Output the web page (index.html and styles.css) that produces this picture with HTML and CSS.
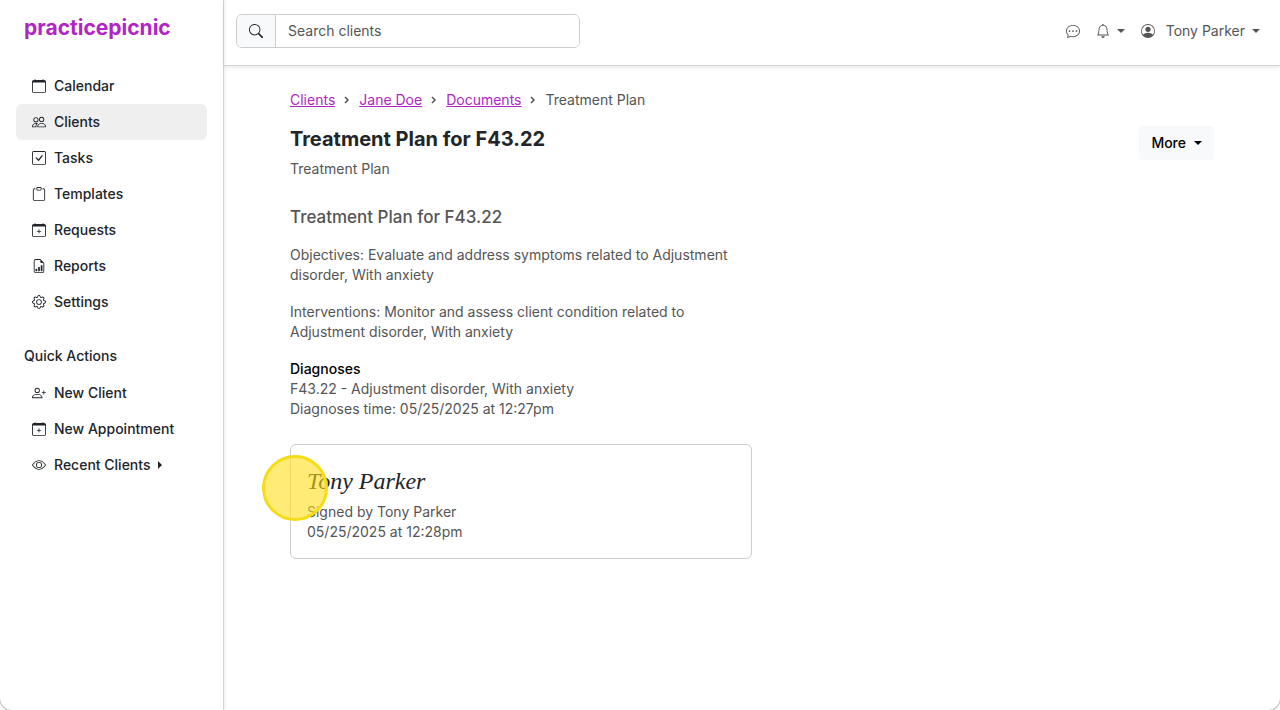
FILE: index.html
```html
<!DOCTYPE html>
<html lang="en">
<head>
<meta charset="UTF-8">
<meta name="viewport" content="width=device-width, initial-scale=1">
<title>Treatment Plan for F43.22 - practicepicnic</title>
<link rel="stylesheet" href="styles.css">
</head>
<body>
<div class="app">

    <aside class="sidebar">
        <a class="brand" href="#">practicepicnic</a>
        <nav class="nav">
            <a class="nav-link" href="#">
                <svg class="icon" viewBox="0 0 16 16"><path d="M3.5 0a.5.5 0 0 1 .5.5V1h8V.5a.5.5 0 0 1 1 0V1h1a2 2 0 0 1 2 2v11a2 2 0 0 1-2 2H2a2 2 0 0 1-2-2V3a2 2 0 0 1 2-2h1V.5a.5.5 0 0 1 .5-.5M1 4v10a1 1 0 0 0 1 1h12a1 1 0 0 0 1-1V4z"/></svg>
                Calendar
            </a>
            <a class="nav-link active" href="#">
                <svg class="icon" viewBox="0 0 16 16"><path d="M15 14s1 0 1-1-1-4-5-4-5 3-5 4 1 1 1 1zm-7.978-1L7 12.996c.001-.264.167-1.03.76-1.72C8.312 10.629 9.282 10 11 10c1.717 0 2.687.63 3.24 1.276.593.69.758 1.457.76 1.72l-.008.002-.014.002zM11 7a2 2 0 1 0 0-4 2 2 0 0 0 0 4m3-2a3 3 0 1 1-6 0 3 3 0 0 1 6 0M6.936 9.28a6 6 0 0 0-1.23-.247A7 7 0 0 0 5 9c-4 0-5 3-5 4q0 1 1 1h4.216A2.24 2.24 0 0 1 5 13c0-1.01.377-2.042 1.09-2.904.243-.294.526-.569.846-.816M4.92 10A5.5 5.5 0 0 0 4 13H1c0-.26.164-1.03.76-1.724.545-.636 1.492-1.256 3.16-1.275ZM1.5 5.5a3 3 0 1 1 6 0 3 3 0 0 1-6 0m3-2a2 2 0 1 0 0 4 2 2 0 0 0 0-4"/></svg>
                Clients
            </a>
            <a class="nav-link" href="#">
                <svg class="icon" viewBox="0 0 16 16"><path d="M14 1a1 1 0 0 1 1 1v12a1 1 0 0 1-1 1H2a1 1 0 0 1-1-1V2a1 1 0 0 1 1-1zM2 0a2 2 0 0 0-2 2v12a2 2 0 0 0 2 2h12a2 2 0 0 0 2-2V2a2 2 0 0 0-2-2z"/><path d="M10.97 4.97a.75.75 0 0 1 1.071 1.05l-3.992 4.99a.75.75 0 0 1-1.08.02L4.324 8.384a.75.75 0 1 1 1.06-1.06l2.094 2.093 3.473-4.425z"/></svg>
                Tasks
            </a>
            <a class="nav-link" href="#">
                <svg class="icon" viewBox="0 0 16 16"><path d="M4 1.5H3a2 2 0 0 0-2 2V14a2 2 0 0 0 2 2h10a2 2 0 0 0 2-2V3.5a2 2 0 0 0-2-2h-1v1h1a1 1 0 0 1 1 1V14a1 1 0 0 1-1 1H3a1 1 0 0 1-1-1V3.5a1 1 0 0 1 1-1h1z"/><path d="M9.5 1a.5.5 0 0 1 .5.5v1a.5.5 0 0 1-.5.5h-3a.5.5 0 0 1-.5-.5v-1a.5.5 0 0 1 .5-.5zm-3-1A1.5 1.5 0 0 0 5 1.5v1A1.5 1.5 0 0 0 6.5 4h3A1.5 1.5 0 0 0 11 2.5v-1A1.5 1.5 0 0 0 9.5 0z"/></svg>
                Templates
            </a>
            <a class="nav-link" href="#">
                <svg class="icon" viewBox="0 0 16 16"><path d="M8 7a.5.5 0 0 1 .5.5V9H10a.5.5 0 0 1 0 1H8.5v1.5a.5.5 0 0 1-1 0V10H6a.5.5 0 0 1 0-1h1.5V7.5A.5.5 0 0 1 8 7"/><path d="M3.5 0a.5.5 0 0 1 .5.5V1h8V.5a.5.5 0 0 1 1 0V1h1a2 2 0 0 1 2 2v11a2 2 0 0 1-2 2H2a2 2 0 0 1-2-2V3a2 2 0 0 1 2-2h1V.5a.5.5 0 0 1 .5-.5M1 4v10a1 1 0 0 0 1 1h12a1 1 0 0 0 1-1V4z"/></svg>
                Requests
            </a>
            <a class="nav-link" href="#">
                <svg class="icon" viewBox="0 0 16 16"><path d="M10 13.5a.5.5 0 0 0 .5.5h1a.5.5 0 0 0 .5-.5v-6a.5.5 0 0 0-.5-.5h-1a.5.5 0 0 0-.5.5zm-2.5.5a.5.5 0 0 1-.5-.5v-4a.5.5 0 0 1 .5-.5h1a.5.5 0 0 1 .5.5v4a.5.5 0 0 1-.5.5zm-3 0a.5.5 0 0 1-.5-.5v-2a.5.5 0 0 1 .5-.5h1a.5.5 0 0 1 .5.5v2a.5.5 0 0 1-.5.5z"/><path d="M14 14V4.5L9.5 0H4a2 2 0 0 0-2 2v12a2 2 0 0 0 2 2h8a2 2 0 0 0 2-2M9.5 3A1.5 1.5 0 0 0 11 4.5h2V14a1 1 0 0 1-1 1H4a1 1 0 0 1-1-1V2a1 1 0 0 1 1-1h5.5z"/></svg>
                Reports
            </a>
            <a class="nav-link" href="#">
                <svg class="icon" viewBox="0 0 16 16"><path d="M8 4.754a3.246 3.246 0 1 0 0 6.492 3.246 3.246 0 0 0 0-6.492M5.754 8a2.246 2.246 0 1 1 4.492 0 2.246 2.246 0 0 1-4.492 0"/><path d="M9.796 1.343c-.527-1.79-3.065-1.79-3.592 0l-.094.319a.873.873 0 0 1-1.255.52l-.292-.16c-1.64-.892-3.433.902-2.54 2.541l.159.292a.873.873 0 0 1-.52 1.255l-.319.094c-1.79.527-1.79 3.065 0 3.592l.319.094a.873.873 0 0 1 .52 1.255l-.16.292c-.892 1.64.901 3.434 2.541 2.54l.292-.159a.873.873 0 0 1 1.255.52l.094.319c.527 1.79 3.065 1.79 3.592 0l.094-.319a.873.873 0 0 1 1.255-.52l.292.16c1.64.893 3.434-.902 2.54-2.541l-.159-.292a.873.873 0 0 1 .52-1.255l.319-.094c1.79-.527 1.79-3.065 0-3.592l-.319-.094a.873.873 0 0 1-.52-1.255l.16-.292c.893-1.64-.902-3.433-2.541-2.54l-.292.159a.873.873 0 0 1-1.255-.52zm-2.633.283c.246-.835 1.428-.835 1.674 0l.094.319a1.873 1.873 0 0 0 2.693 1.115l.291-.16c.764-.415 1.6.42 1.184 1.185l-.159.292a1.873 1.873 0 0 0 1.116 2.692l.318.094c.835.246.835 1.428 0 1.674l-.319.094a1.873 1.873 0 0 0-1.115 2.693l.16.291c.415.764-.42 1.6-1.185 1.184l-.291-.159a1.873 1.873 0 0 0-2.693 1.116l-.094.318c-.246.835-1.428.835-1.674 0l-.094-.319a1.873 1.873 0 0 0-2.692-1.115l-.292.16c-.764.415-1.6-.42-1.184-1.185l.159-.291A1.873 1.873 0 0 0 1.945 8.93l-.319-.094c-.835-.246-.835-1.428 0-1.674l.319-.094A1.873 1.873 0 0 0 3.06 4.377l-.16-.292c-.415-.764.42-1.6 1.185-1.184l.292.159a1.873 1.873 0 0 0 2.692-1.115z"/></svg>
                Settings
            </a>
        </nav>

        <h2 class="nav-heading">Quick Actions</h2>
        <nav class="nav">
            <a class="nav-link" href="#">
                <svg class="icon" viewBox="0 0 16 16"><path d="M6 8a3 3 0 1 0 0-6 3 3 0 0 0 0 6m2-3a2 2 0 1 1-4 0 2 2 0 0 1 4 0m4 8c0 1-1 1-1 1H1s-1 0-1-1 1-4 6-4 6 3 6 4m-1-.004c-.001-.246-.154-.986-.832-1.664C9.516 10.68 8.289 10 6 10s-3.516.68-4.168 1.332c-.678.678-.83 1.418-.832 1.664z"/><path d="M13.5 5a.5.5 0 0 1 .5.5V7h1.5a.5.5 0 0 1 0 1H14v1.5a.5.5 0 0 1-1 0V8h-1.5a.5.5 0 0 1 0-1H13V5.5a.5.5 0 0 1 .5-.5"/></svg>
                New Client
            </a>
            <a class="nav-link" href="#">
                <svg class="icon" viewBox="0 0 16 16"><path d="M8 7a.5.5 0 0 1 .5.5V9H10a.5.5 0 0 1 0 1H8.5v1.5a.5.5 0 0 1-1 0V10H6a.5.5 0 0 1 0-1h1.5V7.5A.5.5 0 0 1 8 7"/><path d="M3.5 0a.5.5 0 0 1 .5.5V1h8V.5a.5.5 0 0 1 1 0V1h1a2 2 0 0 1 2 2v11a2 2 0 0 1-2 2H2a2 2 0 0 1-2-2V3a2 2 0 0 1 2-2h1V.5a.5.5 0 0 1 .5-.5M1 4v10a1 1 0 0 0 1 1h12a1 1 0 0 0 1-1V4z"/></svg>
                New Appointment
            </a>
            <a class="nav-link" href="#">
                <svg class="icon" viewBox="0 0 16 16"><path d="M16 8s-3-5.5-8-5.5S0 8 0 8s3 5.5 8 5.5S16 8 16 8M1.173 8a13 13 0 0 1 1.66-2.043C4.12 4.668 5.88 3.5 8 3.5s3.879 1.168 5.168 2.457A13 13 0 0 1 14.828 8q-.086.13-.195.288c-.335.48-.83 1.12-1.465 1.755C11.879 11.332 10.119 12.5 8 12.5s-3.879-1.168-5.168-2.457A13 13 0 0 1 1.172 8z"/><path d="M8 5.5a2.5 2.5 0 1 0 0 5 2.5 2.5 0 0 0 0-5M4.5 8a3.5 3.5 0 1 1 7 0 3.5 3.5 0 0 1-7 0"/></svg>
                Recent Clients
                <span class="caret-end"></span>
            </a>
        </nav>
    </aside>

    <div class="page">
        <header class="topbar">
            <form class="search">
                <label class="search-label" for="search" aria-label="Search clients">
                    <svg class="icon" viewBox="0 0 16 16"><path d="M11.742 10.344a6.5 6.5 0 1 0-1.397 1.398h-.001q.044.06.098.115l3.85 3.85a1 1 0 0 0 1.415-1.414l-3.85-3.85a1 1 0 0 0-.115-.1zM12 6.5a5.5 5.5 0 1 1-11 0 5.5 5.5 0 0 1 11 0"/></svg>
                </label>
                <input class="search-input" id="search" type="text" placeholder="Search clients">
            </form>
            <div class="user-nav">
                <button class="top-button" type="button" aria-label="Messages">
                    <svg class="icon" viewBox="0 0 16 16"><path d="M5 8a1 1 0 1 1-2 0 1 1 0 0 1 2 0m4 0a1 1 0 1 1-2 0 1 1 0 0 1 2 0m3 1a1 1 0 1 0 0-2 1 1 0 0 0 0 2"/><path d="m2.165 15.803.02-.004c1.83-.363 2.948-.842 3.468-1.105A9 9 0 0 0 8 15c4.418 0 8-3.134 8-7s-3.582-7-8-7-8 3.134-8 7c0 1.76.743 3.37 1.97 4.6a10.4 10.4 0 0 1-.524 2.318l-.003.011a11 11 0 0 1-.244.637c-.079.186.074.394.273.362a22 22 0 0 0 .693-.125m.8-3.108a1 1 0 0 0-.287-.801C1.618 10.83 1 9.468 1 8c0-3.192 3.004-6 7-6s7 2.808 7 6-3.004 6-7 6a8 8 0 0 1-2.088-.272 1 1 0 0 0-.711.074c-.387.196-1.24.57-2.634.893a11 11 0 0 0 .398-2"/></svg>
                </button>
                <button class="top-button" type="button" aria-label="Notifications">
                    <svg class="icon" viewBox="0 0 16 16"><path d="M8 16a2 2 0 0 0 2-2H6a2 2 0 0 0 2 2M8 1.918l-.797.161A4 4 0 0 0 4 6c0 .628-.134 2.197-.459 3.742-.16.767-.376 1.566-.663 2.258h10.244c-.287-.692-.502-1.49-.663-2.258C12.134 8.197 12 6.628 12 6a4 4 0 0 0-3.203-3.92zM14.22 12c.223.447.481.801.78 1H1c.299-.199.557-.553.78-1C2.68 10.2 3 6.88 3 6c0-2.42 1.72-4.44 4.005-4.901a1 1 0 1 1 1.99 0A5 5 0 0 1 13 6c0 .88.32 4.2 1.22 6"/></svg>
                    <span class="caret"></span>
                </button>
                <button class="top-button user" type="button">
                    <svg class="icon" viewBox="0 0 16 16"><path d="M11 6a3 3 0 1 1-6 0 3 3 0 0 1 6 0"/><path fill-rule="evenodd" d="M0 8a8 8 0 1 1 16 0A8 8 0 0 1 0 8m8-7a7 7 0 0 0-5.468 11.37C3.242 11.226 4.805 10 8 10s4.757 1.225 5.468 2.37A7 7 0 0 0 8 1"/></svg>
                    <span class="user-name">Tony Parker</span>
                    <span class="caret"></span>
                </button>
            </div>
        </header>

        <main class="content">
            <nav class="breadcrumb">
                <a href="#">Clients</a>
                <svg class="chevron" viewBox="0 0 6 8"><path d="M1 1l3 3-3 3"/></svg>
                <a href="#">Jane Doe</a>
                <svg class="chevron" viewBox="0 0 6 8"><path d="M1 1l3 3-3 3"/></svg>
                <a href="#">Documents</a>
                <svg class="chevron" viewBox="0 0 6 8"><path d="M1 1l3 3-3 3"/></svg>
                <span>Treatment Plan</span>
            </nav>

            <div class="title-row">
                <div>
                    <h1 class="title">Treatment Plan for F43.22</h1>
                    <p class="subtitle">Treatment Plan</p>
                </div>
                <button class="more" type="button">More <span class="caret"></span></button>
            </div>

            <article class="document">
                <h2 class="document-title">Treatment Plan for F43.22</h2>
                <p>Objectives: Evaluate and address symptoms related to Adjustment disorder, With anxiety</p>
                <p>Interventions: Monitor and assess client condition related to Adjustment disorder, With anxiety</p>
                <section class="diagnoses">
                    <h3>Diagnoses</h3>
                    <div>F43.22 - Adjustment disorder, With anxiety</div>
                    <div>Diagnoses time: 05/25/2025 at 12:27pm</div>
                </section>
                <section class="signature-card">
                    <div class="signature">Tony Parker</div>
                    <div>Signed by Tony Parker</div>
                    <div>05/25/2025 at 12:28pm</div>
                    <span class="click-marker"></span>
                </section>
            </article>
        </main>
    </div>

</div>
</body>
</html>
```

FILE: styles.css
```css
* {
    box-sizing: border-box;
}
body {
    margin: 0;
    background: #fff;
    color: #555;
    font-family: Inter, "Open Sans", sans-serif;
    font-size: 14px;
    line-height: 20px;
}
h1, h2, h3, p {
    margin: 0;
}
button, input {
    font: inherit;
    color: inherit;
}
a {
    color: #b026c4;
}
.app {
    display: flex;
    min-height: 100vh;
    border-radius: 0 0 12px 12px;
    box-shadow: 0 0 0 1px #bbb;
    overflow: hidden;
}
.icon {
    width: 14px;
    height: 14px;
    flex: none;
    fill: currentColor;
}

/* sidebar */
.sidebar {
    flex: 0 0 224px;
    padding: 12px 16px;
    border-right: 1px solid #d4d4d4;
    box-shadow: 1px 0 3px rgba(0, 0, 0, 0.08);
    color: #212529;
}
.brand {
    display: block;
    margin: 0 8px 24px;
    font-size: 21px;
    line-height: 32px;
    font-weight: 700;
    text-decoration: none;
}
.nav-link {
    display: flex;
    align-items: center;
    gap: 8px;
    height: 36px;
    padding: 0 16px;
    border-radius: 6px;
    color: #212529;
    font-weight: 500;
    text-decoration: none;
}
.nav-link.active {
    background: #efefef;
}
.nav-heading {
    margin: 26px 8px 9px;
    font-size: 14px;
    font-weight: 500;
}
.caret-end {
    border-top: 4px solid transparent;
    border-bottom: 4px solid transparent;
    border-left: 4px solid currentColor;
}
.caret {
    border-left: 4px solid transparent;
    border-right: 4px solid transparent;
    border-top: 4px solid currentColor;
}

/* top bar */
.page {
    flex: 1;
    min-width: 0;
}
.topbar {
    display: flex;
    align-items: center;
    justify-content: space-between;
    padding: 14px 20px 17px 12px;
    border-bottom: 1px solid #d4d4d4;
    box-shadow: 0 2px 4px rgba(0, 0, 0, 0.08);
}
.search {
    display: flex;
    flex: 0 1 344px;
    height: 34px;
    border: 1px solid #cdcdcd;
    border-radius: 6px;
    overflow: hidden;
}
.search-label {
    display: flex;
    align-items: center;
    padding: 0 12px;
    background: #f8f9fa;
    border-right: 1px solid #cdcdcd;
    color: #212529;
}
.search-input {
    flex: 1;
    min-width: 0;
    padding: 0 12px;
    border: 0;
    outline: none;
}
.search-input::placeholder {
    color: #555;
    opacity: 1;
}
.user-nav {
    display: flex;
    gap: 16px;
}
.top-button {
    display: flex;
    align-items: center;
    gap: 7px;
    padding: 0;
    border: 0;
    background: none;
}
.user-name {
    margin-left: 4px;
}

/* content */
.content {
    padding: 24px 66px;
}
.breadcrumb {
    display: flex;
    align-items: center;
    gap: 9px;
}
.chevron {
    width: 6px;
    height: 8px;
    fill: none;
    stroke: #555;
    stroke-width: 1.5;
}
.title-row {
    display: flex;
    align-items: flex-start;
    justify-content: space-between;
    margin-top: 16px;
}
.title {
    color: #212529;
    font-size: 20px;
    line-height: 26px;
    font-weight: 700;
}
.subtitle {
    margin-top: 7px;
}
.more {
    display: flex;
    align-items: center;
    gap: 8px;
    height: 34px;
    padding: 0 12px;
    border: 0;
    border-radius: 4px;
    background: #f8f9fa;
    color: #000;
    font-weight: 500;
}
.document {
    max-width: 462px;
    margin-top: 28px;
}
.document-title {
    margin-bottom: 18px;
    font-size: 17px;
    font-weight: 500;
}
.document p {
    margin-bottom: 17px;
}
.diagnoses h3 {
    color: #000;
    font-size: 14px;
    font-weight: 500;
}
.signature-card {
    position: relative;
    margin-top: 25px;
    padding: 16px;
    border: 1px solid #cdcdcd;
    border-radius: 6px;
}
.signature {
    color: #212529;
    font-family: "Liberation Serif", serif;
    font-size: 24px;
    font-style: italic;
    line-height: 41px;
}
.click-marker {
    position: absolute;
    top: 10px;
    left: -29px;
    width: 66px;
    height: 66px;
    border: 3px solid #f5dc14;
    border-radius: 50%;
    background: rgba(255, 221, 26, 0.6);
}
```
